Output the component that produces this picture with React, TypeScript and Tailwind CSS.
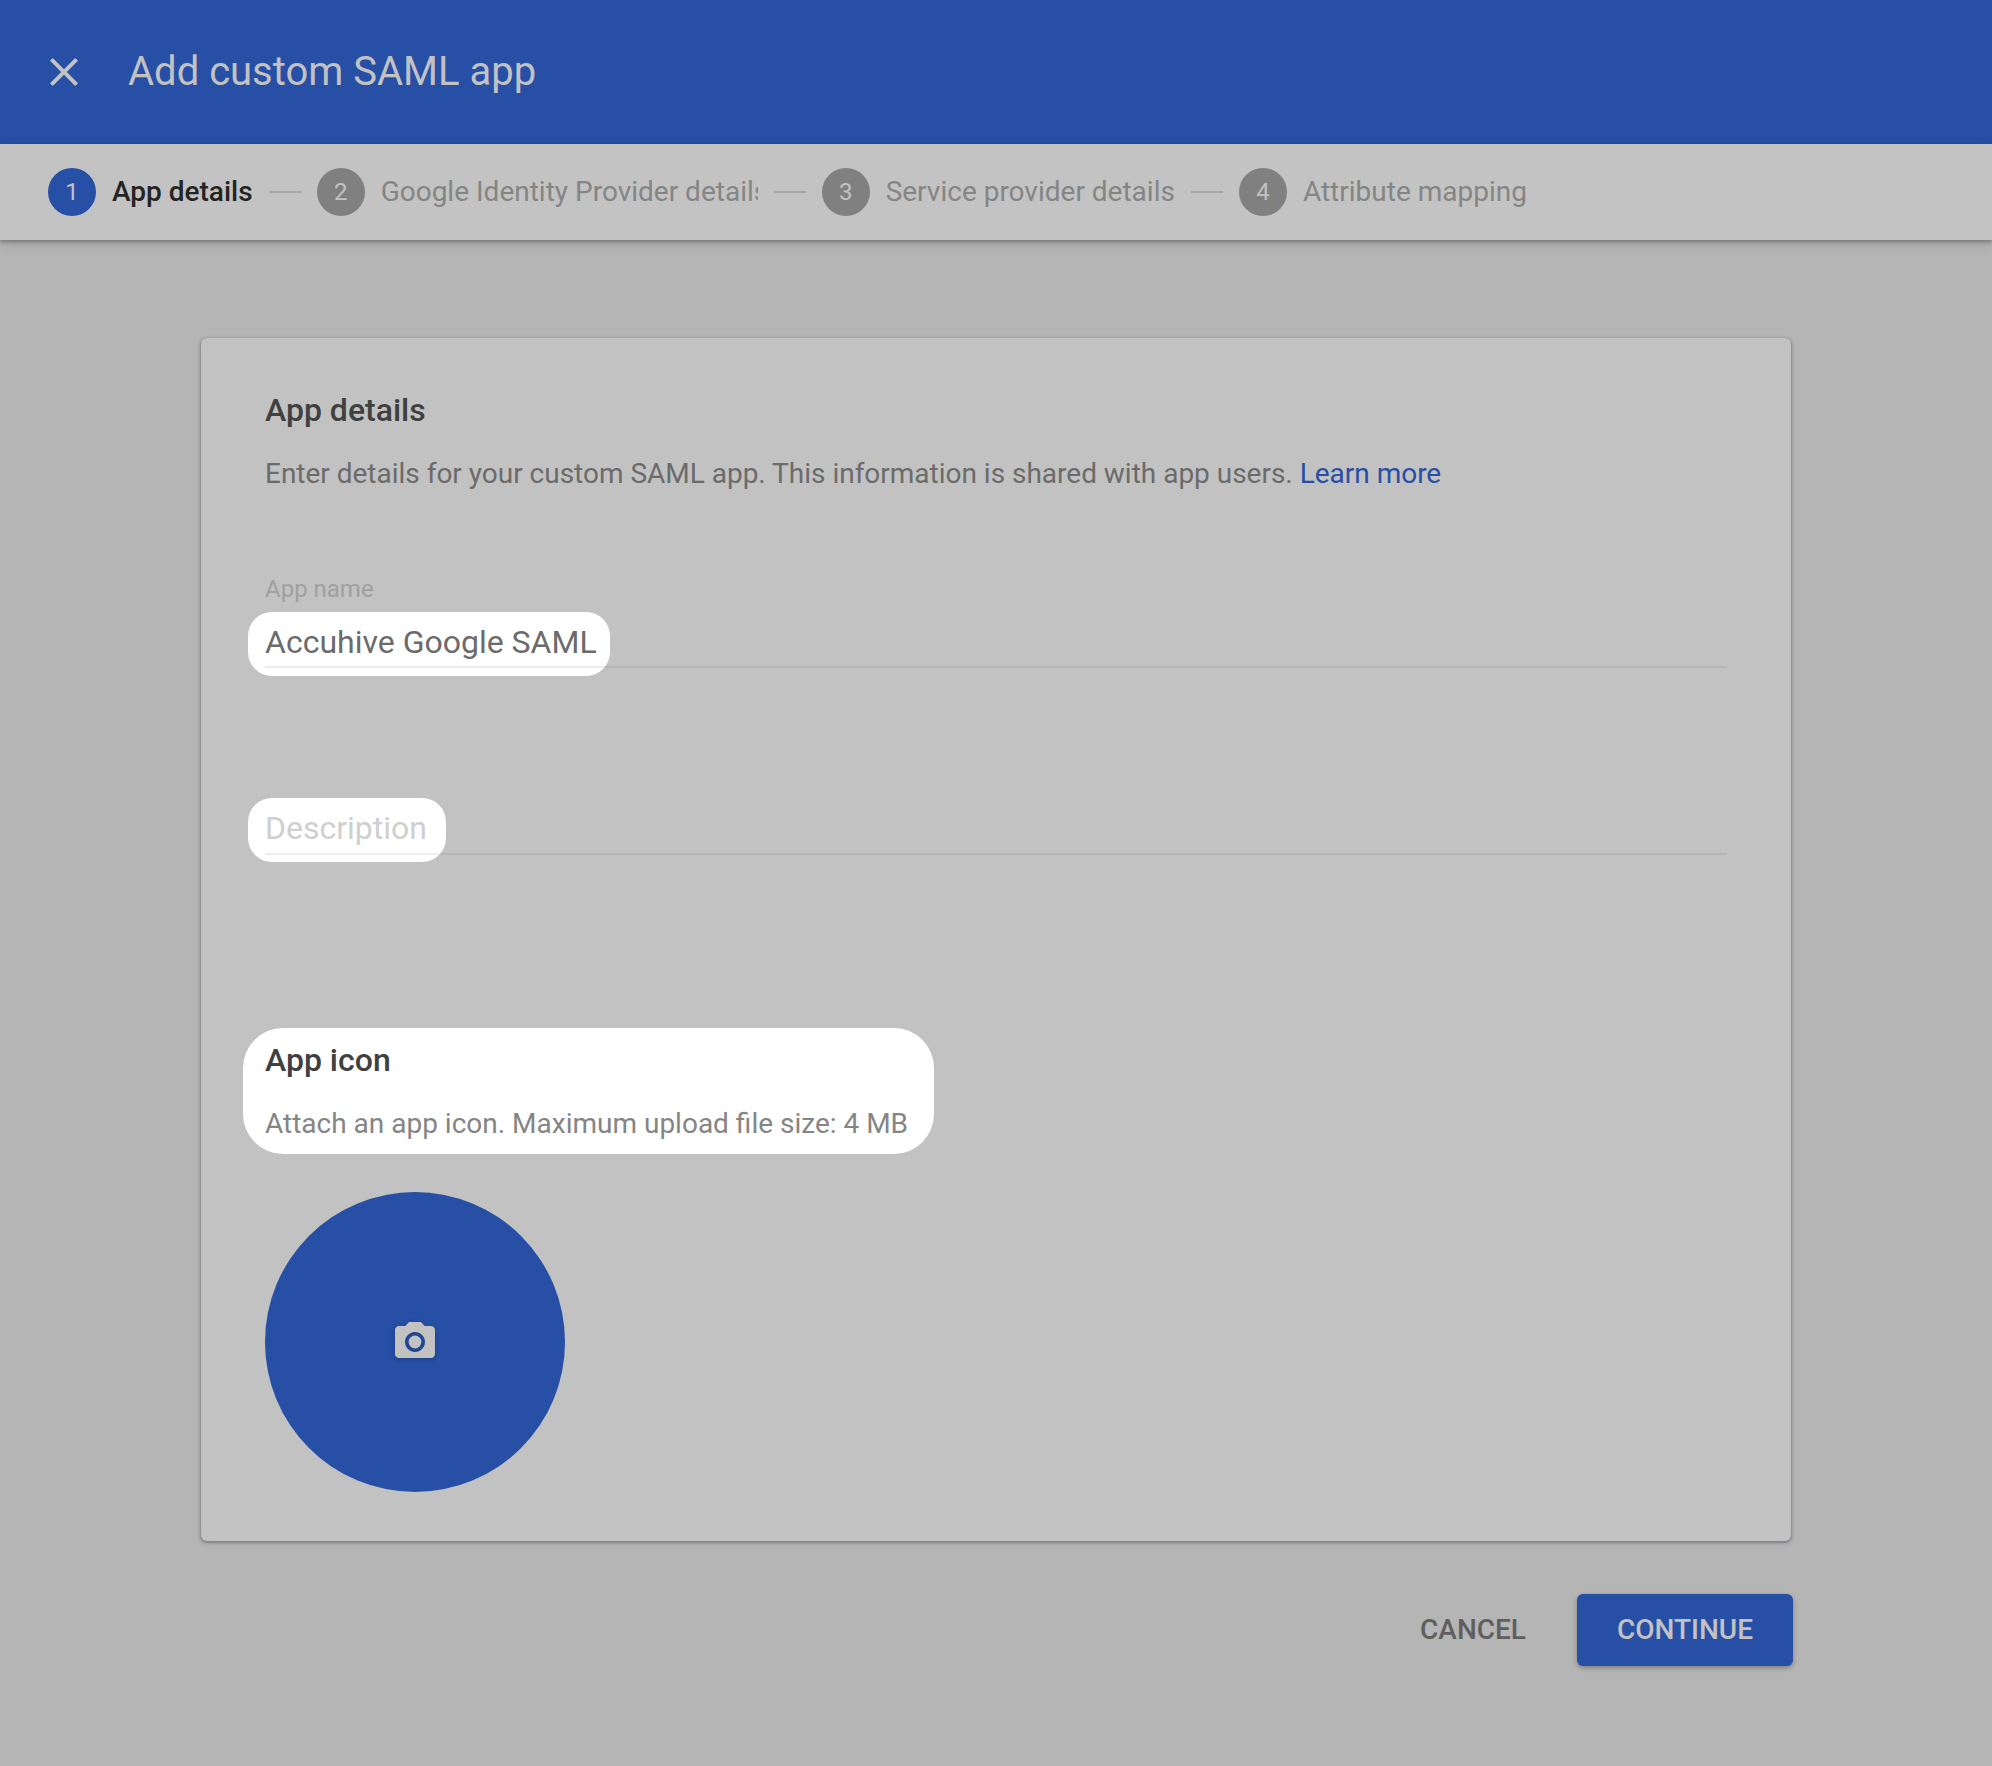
import React from "react";

const steps = [
  { n: 1, label: "App details", active: true },
  { n: 2, label: "Google Identity Provider details", clip: true },
  { n: 3, label: "Service provider details" },
  { n: 4, label: "Attribute mapping" },
];

export default function App() {
  return (
    <div className="flex h-[1766px] w-[1992px] flex-col overflow-hidden bg-[#b5b5b5] font-['Roboto',sans-serif]">
      <header className="flex h-[144px] shrink-0 items-center bg-[#264fa5] pl-[40px] text-[#c2c2c2]">
        <svg width="48" height="48" viewBox="0 0 24 24" fill="currentColor">
          <path d="M19 6.41L17.59 5 12 10.59 6.41 5 5 6.41 10.59 12 5 17.59 6.41 19 12 13.41 17.59 19 19 17.59 13.41 12z" />
        </svg>
        <h1 className="ml-[40px] text-[40px] leading-[48px] font-normal">Add custom SAML app</h1>
      </header>

      <nav className="relative z-10 flex h-[96px] shrink-0 items-center bg-[#c3c3c3] pl-[48px] shadow-[0_2px_4px_rgba(0,0,0,0.3),0_4px_14px_rgba(0,0,0,0.1)]">
        {steps.map((s, i) => (
          <React.Fragment key={s.n}>
            {i > 0 && <div className="mx-[16px] h-[2px] w-[32px] bg-[#a6a6a6]" />}
            <div
              className={
                s.active
                  ? "flex h-[48px] w-[48px] shrink-0 items-center justify-center rounded-full bg-[#264fa5] text-[24px] text-[#c2c2c2]"
                  : "flex h-[48px] w-[48px] shrink-0 items-center justify-center rounded-full bg-[#808080] text-[24px] text-[#c2c2c2]"
              }
            >
              {s.n}
            </div>
            <div
              className={
                s.active
                  ? "ml-[16px] text-[28px] leading-[40px] font-medium text-[#242424]"
                  : s.clip
                    ? "ml-[16px] w-[377px] overflow-hidden text-[28px] leading-[40px] whitespace-nowrap text-[#858585]"
                    : "ml-[16px] text-[28px] leading-[40px] whitespace-nowrap text-[#858585]"
              }
            >
              {s.label}
            </div>
          </React.Fragment>
        ))}
      </nav>

      <main className="flex flex-1 flex-col px-[201px] pt-[98px]">
        <section className="h-[1203px] rounded-[6px] bg-[#c2c2c2] px-[64px] pt-[48px] shadow-[0_1px_2px_1px_rgba(50,50,80,0.3),0_2px_6px_rgba(0,0,0,0.12)]">
          <h2 className="text-[32px] leading-[48px] font-medium text-[#404040]">App details</h2>
          <p className="mt-[20px] text-[28px] leading-[40px] tracking-[-0.012px] text-[#6b6b6b]">
            Enter details for your custom SAML app. This information is shared with app users.{" "}
            <span className="text-[#264fa5]">Learn more</span>
          </p>

          <div className="mt-[79px] w-[1462px]">
            <div className="text-[24px] leading-[32px] text-[#a0a0a0]">App name</div>
            <div className="relative mt-[13px] h-[50px] border-b-2 border-[#b6b6b6]">
              <div className="absolute top-[-6px] left-[-17px] h-[64px] w-[362px] overflow-hidden rounded-[24px] bg-white">
                <div className="absolute top-[54px] left-[17px] h-[2px] w-[345px] bg-[#ededed]" />
              </div>
              <div className="relative text-[32px] leading-[48px] text-[#6b6b6b]">Accuhive Google SAML</div>
            </div>
          </div>

          <div className="relative mt-[136px] h-[51px] w-[1462px] border-b-2 border-[#b6b6b6]">
            <div className="absolute top-[-6px] left-[-17px] h-[64px] w-[198px] overflow-hidden rounded-[24px] bg-white">
              <div className="absolute top-[55px] left-[17px] h-[2px] w-[181px] bg-[#ededed]" />
            </div>
            <div className="relative text-[32px] leading-[48px] text-[#cfcfcf]">Description</div>
          </div>

          <div className="relative mt-[181px]">
            <div className="absolute top-[-8px] left-[-22px] h-[126px] w-[691px] rounded-[40px] bg-white" />
            <h3 className="relative text-[32px] leading-[48px] font-medium text-[#404040]">App icon</h3>
            <p className="relative mt-[20px] text-[28px] leading-[40px] text-[#858585]">
              Attach an app icon. Maximum upload file size: 4 MB
            </p>
          </div>

          <div className="mt-[48px] flex h-[300px] w-[300px] items-center justify-center rounded-full bg-[#264fa5]">
            <svg
              width="48"
              height="48"
              viewBox="0 0 24 24"
              fill="#c2c2c2"
              className="drop-shadow-[0_1px_2px_rgba(0,0,0,0.25)]"
            >
              <path d="M9 2L7.17 4H4c-1.1 0-2 .9-2 2v12c0 1.1.9 2 2 2h16c1.1 0 2-.9 2-2V6c0-1.1-.9-2-2-2h-3.17L15 2H9zm3 15c-2.76 0-5-2.24-5-5s2.24-5 5-5 5 2.24 5 5-2.24 5-5 5z" />
              <circle cx="12" cy="12" r="3.2" />
            </svg>
          </div>
        </section>

        <div className="mt-[53px] flex items-center justify-end">
          <button className="mr-[51px] text-[28px] leading-[40px] font-medium text-[#5f5f5f]">CANCEL</button>
          <button className="-mr-[2px] h-[72px] w-[216px] rounded-[6px] bg-[#264fa5] text-[28px] font-medium text-[#c2c2c2] shadow-[0_2px_5px_rgba(0,0,0,0.3)]">
            CONTINUE
          </button>
        </div>
      </main>
    </div>
  );
}
